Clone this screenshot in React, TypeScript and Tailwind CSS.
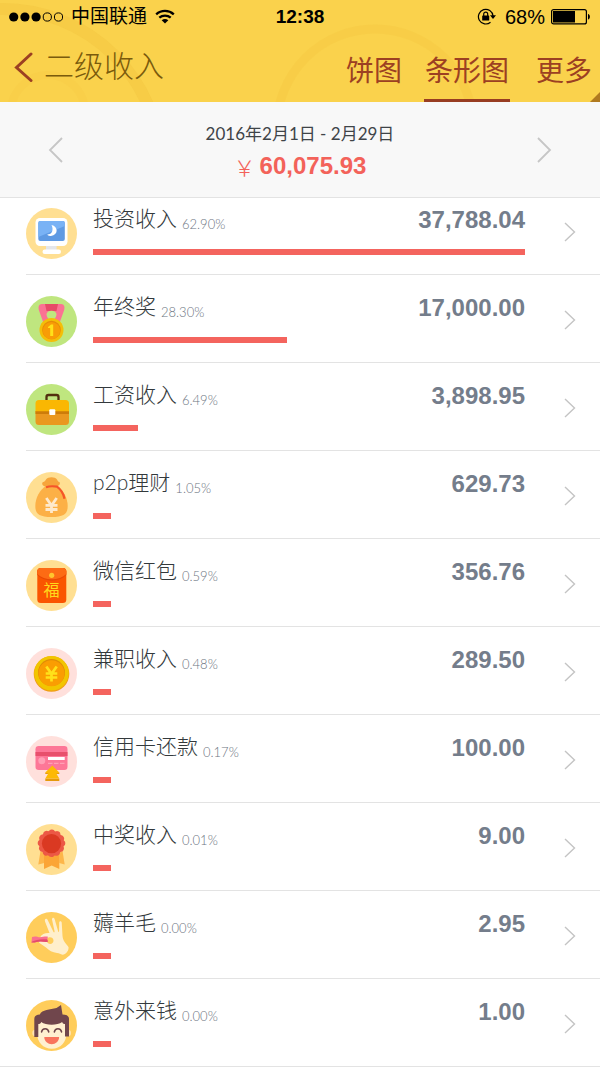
import React from 'react';

interface IncomeItem {
  id: string;
  name: string;
  percent: number;
  amount: string;
  icon: React.ReactNode;
}

const MonitorIcon = () => (
  <svg viewBox="0 0 51 51" className="w-full h-full" aria-hidden="true">
    <circle cx="25.5" cy="25.5" r="25.5" fill="#ffdf92" />
    <path d="M20 37h10.600v5H20z" fill="#e4e6ea" />
    <rect x="16.500" y="41.500" width="18.500" height="4.500" rx="2.200" fill="#fff" />
    <rect x="9.500" y="10" width="32" height="28" rx="4.500" fill="#fff" />
    <rect x="12.300" y="13" width="26.500" height="20" rx="2" fill="#5f9ae3" />
    <path d="M14.300 13h22.500a2 2 0 0 1 2 2v3L12.300 29V15a2 2 0 0 1 2-2z" fill="#79b2f5" />
    <path d="M25.500 17c7 1.500 7 10-.5 11-2 .3-3.500-.7-3.700-1.400 5 0 6.500-5.300 4.200-9.600z" fill="#fff" />
  </svg>
);

const MedalIcon = () => (
  <svg viewBox="0 0 51 51" className="w-full h-full" aria-hidden="true">
    <circle cx="25.5" cy="25.5" r="25.5" fill="#bfe67f" />
    <path d="M16 8h19c3.500 0 4 3 3 6.500L33.500 27h-16L13 14.500C12 11 12.500 8 16 8z" fill="#fb7293" />
    <path d="M19 8h13l-1.500 7h-10z" fill="#e74a68" />
    <path d="M20.500 18c.5-4.500 9.500-4.500 10 0 0 2-1 4-2.500 5.500h-5c-1.500-1.500-2.500-3.500-2.500-5.500z" fill="#bfe67f" />
    <circle cx="25.500" cy="34" r="12" fill="#f4be08" />
    <circle cx="25.500" cy="34" r="9.300" fill="#e78a08" />
    <circle cx="25.500" cy="34.600" r="8.700" fill="#f89c06" />
    <path d="M22 31l3-2.500h2.200V40h-3v-8H22z" fill="#ffe11a" />
  </svg>
);

const BriefcaseIcon = () => (
  <svg viewBox="0 0 51 51" className="w-full h-full" aria-hidden="true">
    <circle cx="25.5" cy="25.5" r="25.5" fill="#bfe67f" />
    <path d="M20.500 17v-4a2 2 0 0 1 2-2h8a2 2 0 0 1 2 2v4" fill="none" stroke="#52300f" strokeWidth="2.300" />
    <path d="M9.500 27h33.500v10.500a3.500 3.500 0 0 1-3.500 3.500H13a3.500 3.500 0 0 1-3.500-3.500z" fill="#ea981f" />
    <path d="M9.500 28V19.500a3.500 3.500 0 0 1 3.500-3.500h26.500a3.500 3.500 0 0 1 3.500 3.500V28z" fill="#fab702" />
    <path d="M9.500 27.200h33.500v2.800H9.500z" fill="#cd7c0a" />
    <rect x="23.300" y="25.300" width="6" height="5.800" rx="1" fill="#fff" />
  </svg>
);

const MoneyBagIcon = () => (
  <svg viewBox="0 0 51 51" className="w-full h-full" aria-hidden="true">
    <circle cx="25.5" cy="25.5" r="25.5" fill="#ffdf92" />
    <path d="M19 14.500c-3-1-3.500-3.500-2-4.500 2-.3 2-1.200 3-2.500 2-3 9-3 11 0 .8 1.500 1 2.200 2.500 2.500 1.200 1.500 0 3.500-2.500 4.500z" fill="#f6a53b" />
    <path d="M20 14h11c6 3.500 10.700 12 10.700 20 0 8-4 11-16.200 11S9.300 42 9.300 34C9.300 26 14 17.500 20 14z" fill="#fcb046" />
    <path d="M20 15.200c3-1 7-1.200 11-.5 4 3 6.500 7 7.500 12" fill="none" stroke="#f5552a" strokeWidth="2.200" />
    <path d="M20.300 26l5.200 7.500 5.200-7.500M19.500 33.300h12M19.500 37.500h12M25.500 33v8" fill="none" stroke="#fee9cc" strokeWidth="2.800" />
  </svg>
);

const RedPacketIcon = () => (
  <svg viewBox="0 0 51 51" className="w-full h-full" aria-hidden="true">
    <circle cx="25.5" cy="25.5" r="25.5" fill="#ffdf92" />
    <rect x="11.300" y="8" width="29" height="35" rx="3.500" fill="#fa5500" />
    <path d="M11.300 15c7 7.500 22 7.500 29 0v-3.500a3.500 3.500 0 0 0-3.500-3.500h-22a3.500 3.500 0 0 0-3.500 3.500z" fill="#e84a04" />
    <path d="M11.300 14c7 7 22 7 29 0v-2.500a3.500 3.500 0 0 0-3.500-3.500h-22a3.500 3.500 0 0 0-3.500 3.500z" fill="#fd6b14" />
    <circle cx="25.700" cy="15.300" r="2.600" fill="#ffc52e" />
    <text x="25.500" y="36" textAnchor="middle" fontSize="16" fill="#ffd91c" className="font-['Noto_Sans_CJK_SC',sans-serif]">福</text>
  </svg>
);

const CoinIcon = () => (
  <svg viewBox="0 0 51 51" className="w-full h-full" aria-hidden="true">
    <circle cx="25.5" cy="25.5" r="25.5" fill="#ffe0dc" />
    <circle cx="25.500" cy="26" r="17.800" fill="#ef9c18" />
    <circle cx="25.500" cy="25.200" r="17.300" fill="#f2c500" />
    <circle cx="25.500" cy="24.500" r="13.500" fill="#e08c06" />
    <circle cx="25.500" cy="25.300" r="13" fill="#fa9d02" />
    <path d="M20.300 18.500l5.200 7.300 5.200-7.300M19.700 25.500h11.600M19.700 29.500h11.600M25.500 25.500v8" fill="none" stroke="#ffe11a" strokeWidth="2.700" />
  </svg>
);

const CreditCardIcon = () => (
  <svg viewBox="0 0 51 51" className="w-full h-full" aria-hidden="true">
    <circle cx="25.5" cy="25.5" r="25.5" fill="#ffe0dc" />
    <rect x="9.500" y="10" width="32" height="24" rx="3.200" fill="#fd7797" />
    <path d="M9.500 16h32v4h-32z" fill="#e8506c" />
    <circle cx="15.800" cy="24.700" r="3.500" fill="#ff9fb5" />
    <path d="M22 21h16.700v3H22z" fill="#fff" />
    <path d="M22 27.300h16.700" stroke="#ffa9bd" strokeWidth="1" strokeDasharray="4.500 1.500" />
    <path d="M19.300 36.500h14V38h-14zM19.300 42.500h14V45h-14z" fill="#e59a0c" />
    <path d="M26.300 29.500l7 7-3 1 3 5h-14l3-5-3-1z" fill="#fdb905" />
  </svg>
);

const RosetteIcon = () => (
  <svg viewBox="0 0 51 51" className="w-full h-full" aria-hidden="true">
    <circle cx="25.5" cy="25.5" r="25.5" fill="#ffdf92" />
    <path d="M14.500 27L12.300 40.500l6-1.500V29zM36.500 27l2.200 13.500-5.500-1.500V29z" fill="#fdb64a" />
    <path d="M18 27h15.300v18l-7.600-3.500L18 45z" fill="#fba536" />
    <circle cx="25.500" cy="19.300" r="12.500" fill="#ec5845" />
    <circle cx="25.500" cy="19.300" r="10.800" fill="none" stroke="#ec5845" strokeWidth="6" strokeLinecap="round" strokeDasharray="0.010 5.645" />
    <circle cx="25.500" cy="19.600" r="9.600" fill="#da3922" />
  </svg>
);

const HandIcon = () => (
  <svg viewBox="0 0 51 51" className="w-full h-full" aria-hidden="true">
    <circle cx="25.5" cy="25.5" r="25.5" fill="#ffcd5b" />
    <path d="M18.800 8c.5-1.700 2.200-1.500 3 .3L27.500 20c.6.800 1.300.3 1-1L26 7.500c0-1.900 1.900-2.300 2.600-.5l3.600 12.500c.4.900.8.500.9-.5l.1-8.500c.3-1.700 2.200-1.600 2.500.1L36.500 24c.3 4.500 3 7 6 11 .5 3-2 7.300-6 7.700-2-.7-3-1.500-5.500-1.700-4.500-.5-8-2.500-11-5.500L13.500 31c-1-1-.5-2.200 1-2h6c1.500 4.200 7 3.700 7-.5 0-3.500-4.500-4.500-7-1.800l-6.500-1.200c1.500-3.500 5.500-4.800 9.500-4.500L19 9.500z" fill="#ffefcc" />
    <path d="M6 25c3-1.300 5.500 0 8 .3 3-.3 5-1.300 8-.6l-.8 2.600.8 2.500c-3 .5-5-.5-8-.3-3 .3-5 1.300-8.500 1z" fill="#fa7090" />
    <path d="M5.700 29.800c4-2.300 9-3 15.500-2.500l.8 2.500c-3 .5-5-.5-8-.3-3 .3-5 1.300-8.500 1z" fill="#e34c6c" />
  </svg>
);

const FaceIcon = () => (
  <svg viewBox="0 0 51 51" className="w-full h-full" aria-hidden="true">
    <circle cx="25.5" cy="25.5" r="25.5" fill="#ffcd5b" />
    <circle cx="9.500" cy="33" r="3.200" fill="#ffe3b0" />
    <circle cx="41.800" cy="33" r="3.200" fill="#ffe3b0" />
    <path d="M11 20h29.500v13c0 9-6 15.800-14.700 15.800S11 42 11 33z" fill="#fff0d0" />
    <path d="M8.300 37V19c0-3 2-4.300 5.500-4.500C16 9.500 24 9.500 30.500 8l4.500-3 1.500 9.500c4 0 6.500 1.500 6.500 4.500v17.500h-4V24c-1.500 0-2.500-.5-2.800-2-5 3.500-16 3.500-21 0-.3 1.500-1.500 2-2.900 2v13z" fill="#70464c" />
    <path d="M15.500 32c.8-4.500 6.500-4.500 7.300 0M28.300 32c.8-4.500 6.500-4.500 7.300 0" fill="none" stroke="#70464c" strokeWidth="1.500" strokeLinecap="round" />
    <path d="M18.300 37h14.800c0 9.500-14.800 9.500-14.800 0z" fill="#f9745c" />
  </svg>
);

const items: IncomeItem[] = [
  { id: 'invest', name: '投资收入', percent: 62.9, amount: '37,788.04', icon: <MonitorIcon /> },
  { id: 'bonus', name: '年终奖', percent: 28.3, amount: '17,000.00', icon: <MedalIcon /> },
  { id: 'salary', name: '工资收入', percent: 6.49, amount: '3,898.95', icon: <BriefcaseIcon /> },
  { id: 'p2p', name: 'p2p理财', percent: 1.05, amount: '629.73', icon: <MoneyBagIcon /> },
  { id: 'wechat', name: '微信红包', percent: 0.59, amount: '356.76', icon: <RedPacketIcon /> },
  { id: 'parttime', name: '兼职收入', percent: 0.48, amount: '289.50', icon: <CoinIcon /> },
  { id: 'credit', name: '信用卡还款', percent: 0.17, amount: '100.00', icon: <CreditCardIcon /> },
  { id: 'lottery', name: '中奖收入', percent: 0.01, amount: '9.00', icon: <RosetteIcon /> },
  { id: 'freebie', name: '薅羊毛', percent: 0, amount: '2.95', icon: <HandIcon /> },
  { id: 'windfall', name: '意外来钱', percent: 0, amount: '1.00', icon: <FaceIcon /> },
];

const maxPercent = Math.max(...items.map(i => i.percent));

const StatusBar = () => (
  <div className="relative grid grid-cols-[1fr_auto_1fr] items-center h-8 pt-px px-[9px] text-black">
    <div className="flex items-center">
      <svg viewBox="0 0 54 10" className="w-[54px] h-[10px]" aria-hidden="true">
        <circle cx="4.700" cy="5" r="4.600" />
        <circle cx="15.900" cy="5" r="4.600" />
        <circle cx="27.100" cy="5" r="4.600" />
        <circle cx="38.300" cy="5" r="4.100" fill="none" stroke="#000" />
        <circle cx="49.500" cy="5" r="4.100" fill="none" stroke="#000" />
      </svg>
      <span className="ml-2 text-[19px] leading-6">中国联通</span>
      <svg viewBox="0 0 20 15" className="ml-2 w-5 h-[15px]" aria-hidden="true">
        <path d="M1.200 5.300c5-4.600 12.600-4.600 17.600 0M4.300 8.700c3.300-2.900 8.100-2.900 11.400 0" fill="none" stroke="#000" strokeWidth="2.300" />
        <path d="M6.700 11.200c2-1.700 4.600-1.700 6.600 0L10 14.600z" />
      </svg>
    </div>
    <span className="text-center text-[19px] leading-6 font-bold">12:38</span>
    <div className="flex items-center justify-end">
      <svg viewBox="0 0 20 17" className="w-5 h-[17px]" aria-hidden="true">
        <path d="M13.500 14.200A7.300 7.300 0 1 1 16 8" fill="none" stroke="#000" strokeWidth="1.200" />
        <path d="M13 7.300h6L16 11z" />
        <rect x="5.200" y="7.500" width="7" height="5" rx=".6" />
        <path d="M6.700 8V6.200a2 2 0 0 1 4 0V8" fill="none" stroke="#000" strokeWidth="1.200" />
      </svg>
      <span className="ml-2 text-[20px] leading-6">68%</span>
      <svg viewBox="0 0 40 16" className="ml-[6px] w-10 h-4" aria-hidden="true">
        <rect x=".6" y=".6" width="34.800" height="14.300" rx="2" fill="none" stroke="#000" strokeWidth="1.200" />
        <rect x="2" y="2" width="22" height="11.500" />
        <path d="M37 5c2.500.5 2.500 5 0 5.500z" />
      </svg>
    </div>
  </div>
);

const tabClass = 'flex h-[70px] items-center border-b-[3px] pt-3 text-[28px] leading-8 text-[#9c4022]';

const Header = () => (
  <header className="relative bg-[#fad24c]">
    {/* Faint coin pattern */}
    <svg className="absolute inset-0 w-full h-full" viewBox="0 0 600 102" preserveAspectRatio="xMidYMid slice" fill="none" stroke="#f3c540" aria-hidden="true">
      <circle cx="2" cy="168" r="159" strokeWidth="12" opacity=".5" />
      <circle cx="375" cy="127" r="98" strokeWidth="9" opacity=".35" />
      <circle cx="48" cy="112" r="37" strokeWidth="8" opacity=".2" />
    </svg>
    <StatusBar />
    <nav className="relative flex h-[70px] items-center justify-between pl-[14px] pr-2">
      <button type="button" className="flex items-center">
        <svg viewBox="0 0 19 30" className="w-[19px] h-[30px]" aria-hidden="true">
          <path d="M17 2L2.500 15.500 17 28.500" fill="none" stroke="#9c4022" strokeWidth="3" strokeLinecap="round" />
        </svg>
        <span className="ml-[11px] text-[30px] leading-9 font-light text-[#7a5b0c]">二级收入</span>
      </button>
      <div className="flex items-center">
        <button type="button" className={`${tabClass} border-transparent`}>饼图</button>
        <button type="button" className={`${tabClass} ml-[22px] px-px border-[#983d22]`}>条形图</button>
        <button type="button" className={`${tabClass} ml-[26px] border-transparent`}>更多</button>
      </div>
    </nav>
    <svg viewBox="0 0 10 10" className="absolute right-0 bottom-0 w-[10px] h-[10px]" aria-hidden="true">
      <path d="M10 0v10H0z" fill="#b07a20" />
    </svg>
  </header>
);

const PeriodBar = () => (
  <section className="flex items-center justify-between h-24 px-12 bg-[#f8f8f8] border-b border-[#e3e3e3]">
    <button type="button" aria-label="上一月">
      <svg viewBox="0 0 16 28" className="w-4 h-7" aria-hidden="true">
        <path d="M14 2L2 14l12 12" fill="none" stroke="#c6c6c6" strokeWidth="1.800" />
      </svg>
    </button>
    <div className="text-center">
      <p className="text-[17px] leading-8 text-[#3f4448] font-[Lato,'Noto_Sans_CJK_SC',sans-serif]">2016年2月1日 - 2月29日</p>
      <p className="flex items-center justify-center text-[#f3625a]">
        <span className="mr-1 text-[22px] leading-8 font-light font-['Noto_Sans_CJK_SC',sans-serif]">￥</span>
        <span className="text-[24px] leading-8 font-bold font-['Liberation_Sans',sans-serif]">60,075.93</span>
      </p>
    </div>
    <button type="button" aria-label="下一月">
      <svg viewBox="0 0 16 28" className="w-4 h-7" aria-hidden="true">
        <path d="M2 2l12 12L2 26" fill="none" stroke="#c6c6c6" strokeWidth="1.800" />
      </svg>
    </button>
  </section>
);

const IncomeRow: React.FC<{ item: IncomeItem }> = ({ item }) => (
  <li className="group pl-[26px] last:pl-0 border-[#e3e3e3] last:border-b">
    <button
      type="button"
      className="flex w-full items-start pt-[19px] pb-[15px] pr-6 text-left border-b border-[#e3e3e3] group-first:pt-2 group-last:pl-[26px] group-last:border-b-0"
    >
      <span className="mt-[2px] w-[51px] h-[51px] shrink-0">{item.icon}</span>
      <span className="ml-4 flex-1">
        <span className="flex h-[43px] items-start justify-between">
          <span className="flex items-start">
            <span className="text-[21px] leading-6 font-light text-[#33393c] font-[Lato,'Noto_Sans_CJK_SC',sans-serif]">{item.name}</span>
            <span className="ml-[5px] mt-[6px] text-[13px] leading-6 font-light text-[#6d7582] font-[Lato,sans-serif]">
              {item.percent.toFixed(2)}%
            </span>
          </span>
          <span className="mt-[2px] text-[24px] leading-6 font-bold text-[#747d8b] font-['Liberation_Sans',sans-serif]">{item.amount}</span>
        </span>
        <span
          className="block h-[6px] min-w-[18px] bg-[#f4645e]"
          style={{ width: `${(item.percent / maxPercent) * 100}%` }}
        />
      </span>
      <svg viewBox="0 0 12 20" className="ml-[39px] mt-4 w-3 h-5 shrink-0" aria-hidden="true">
        <path d="M1 1l9.500 9L1 19" fill="none" stroke="#c4c4c4" strokeWidth="1.400" />
      </svg>
    </button>
  </li>
);

export default function App() {
  return (
    <div className="w-full bg-white font-['Liberation_Sans','Noto_Sans_CJK_SC',sans-serif]">
      <Header />
      <main>
        <PeriodBar />
        <ul>
          {items.map(item => (
            <IncomeRow key={item.id} item={item} />
          ))}
        </ul>
      </main>
    </div>
  );
}
